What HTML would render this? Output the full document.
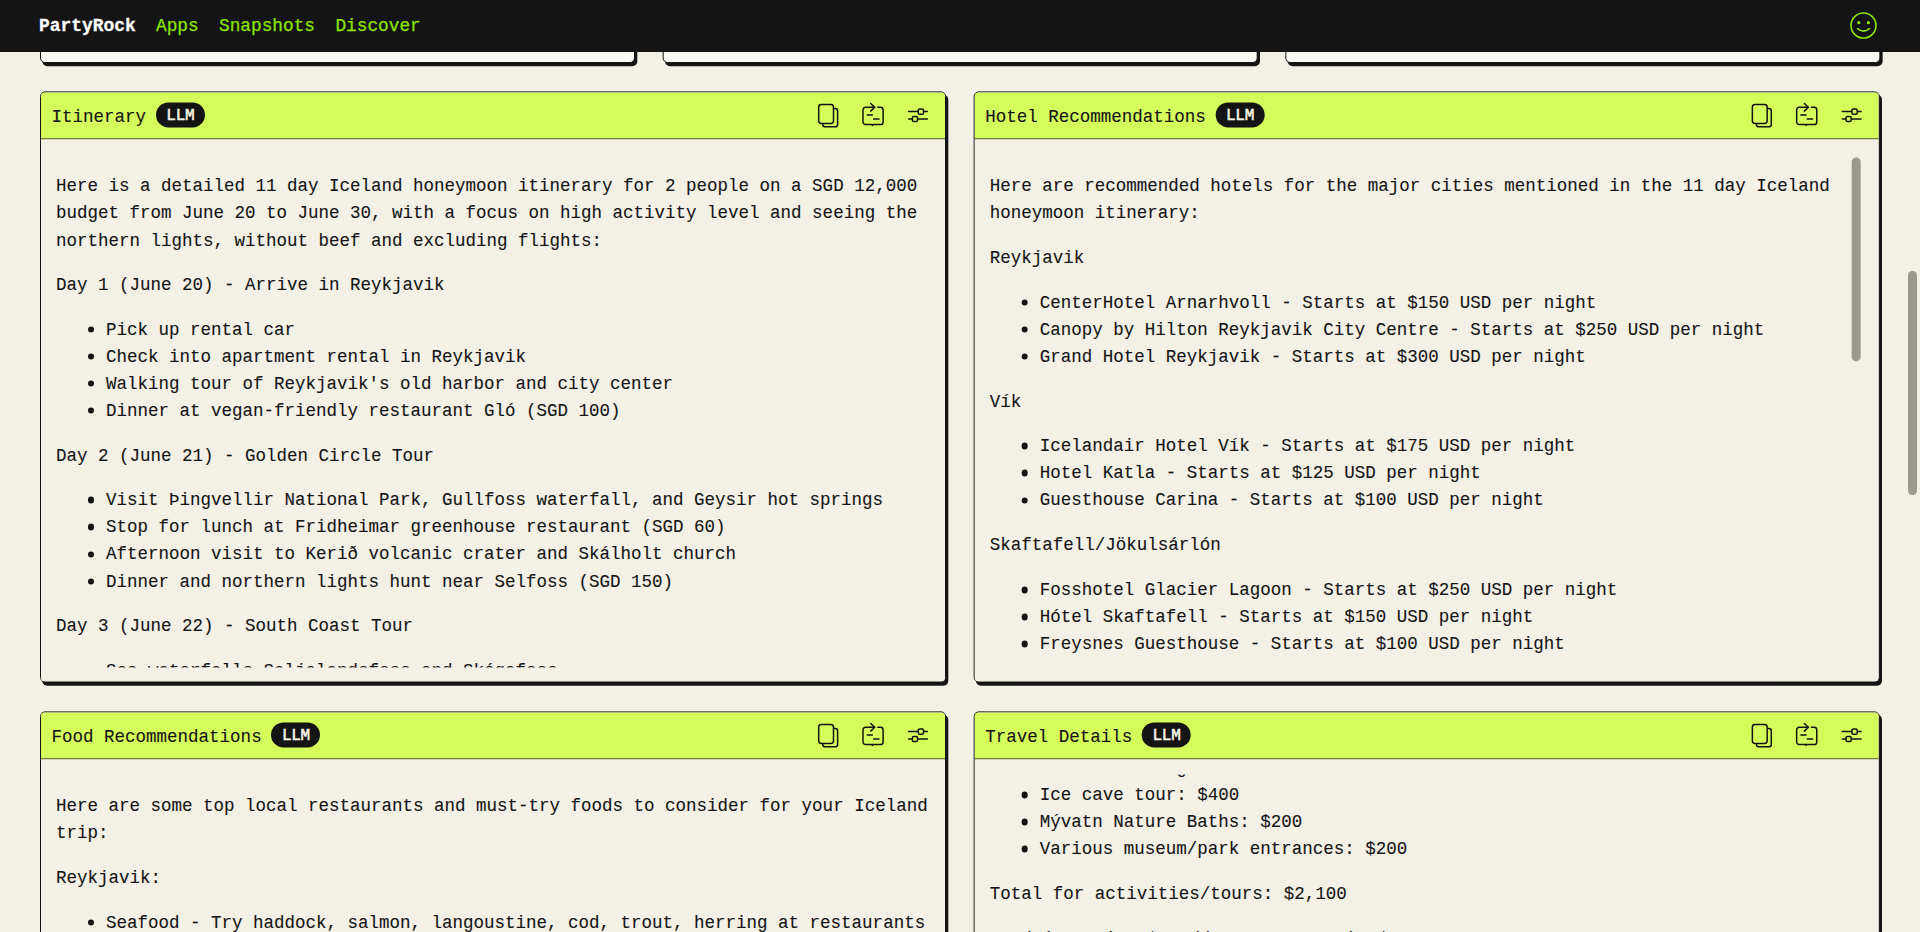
<!DOCTYPE html>
<html lang="en">
<head>
<meta charset="utf-8">
<title>PartyRock</title>
<style>
:root{
  --bg:#f3f0e6;
  --ink:#141414;
  --lime:#d4fd5c;
  --nav:#8be400;
  --fs:17.5px;
  --lh:27.07px;
}
*{box-sizing:border-box;margin:0;padding:0}
html,body{width:1920px;height:932px;overflow:hidden;background:var(--bg)}
body{position:relative;font-family:"Liberation Mono","DejaVu Sans Mono",monospace;font-size:var(--fs);line-height:var(--lh);color:var(--ink);-webkit-text-stroke:0.1px var(--ink)}
/* ---------- top bar ---------- */
.topbar{position:absolute;left:0;top:0;width:1920px;height:52px;background:#141414;z-index:10}
.topbar .brand{position:absolute;left:39px;top:12.6px;height:27px;line-height:27px;color:#fff;font-weight:bold;font-size:17.9px;-webkit-text-stroke:0.3px #fff}
.topbar a{position:absolute;top:12.6px;height:27px;line-height:27px;color:var(--nav);font-size:17.8px;text-decoration:none;-webkit-text-stroke:0.25px var(--nav)}
.topbar .smile{position:absolute;left:1848.5px;top:10.9px;width:29px;height:29px}
/* ---------- cards ---------- */
.card{position:absolute;left:0;top:0;border:1px solid #141414;border-radius:5px;background:var(--bg);box-shadow:2.3px 3.3px 0 0 #141414;overflow:hidden}
.card.light{background:#faf9f4}
.card .hd{position:relative;height:47px;background:var(--lime);border-bottom:1px solid #2a2a22}
.card .hd .title{position:absolute;left:10.6px;top:12.1px;height:27px;line-height:27px;white-space:nowrap;font-size:17.5px}
.card .hd .badge{display:inline-block;vertical-align:top;margin-left:9.7px;margin-top:-2.1px;width:49px;height:25px;padding-top:1.9px;line-height:25.6px;border-radius:13px;background:#141414;color:#f6f4e4;font-weight:normal;font-size:16px;letter-spacing:-0.3px;text-align:center;-webkit-text-stroke:0.55px #f6f4e4}
.card .hd svg{position:absolute;top:-0.9px;left:-1px}
.card .bd{position:absolute;left:0;right:0;top:46.6px;bottom:0;overflow:hidden;background:var(--bg)}
.card .clip{position:absolute;left:0;right:0;top:15px;bottom:14.1px;overflow:hidden}
.card .ct{position:absolute;left:15px;right:15px;top:0}
.ct p{margin:0 0 17.73px 0;white-space:nowrap}
.ct ul{list-style:none;margin:0 0 17.73px 0}
.ct li{position:relative;padding-left:50px;white-space:nowrap}
.ct li::before{content:"";position:absolute;left:31.6px;top:9.1px;width:6.6px;height:6.6px;border-radius:50%;background:#141414}
.thumb{position:absolute;width:9px;border-radius:4.5px;background:#9a9a92}
</style>
</head>
<body>

<div class="topbar">
  <span class="brand">PartyRock</span>
  <a style="left:156px">Apps</a>
  <a style="left:219px">Snapshots</a>
  <a style="left:335.4px">Discover</a>
  <svg class="smile" viewBox="0 0 29 29" fill="none" stroke="#8be400" stroke-width="1.6" stroke-linecap="round">
    <circle cx="14.5" cy="14.5" r="12.5"/>
    <circle cx="9.8" cy="11.7" r="1.6" fill="#8be400" stroke="none"/>
    <circle cx="19.4" cy="11.7" r="1.6" fill="#8be400" stroke="none"/>
    <path d="M8.6 17.6 Q14.5 22.6 20.4 17.6"/>
  </svg>
</div>

<!-- row 1 : partially hidden cards -->
<div class="card light" style="transform:translate(40px,-100px);width:594.67px;height:163px"></div>
<div class="card light" style="transform:translate(662.67px,-100px);width:594.67px;height:163px"></div>
<div class="card light" style="transform:translate(1285.33px,-100px);width:594.67px;height:163px"></div>

<div class="card" style="transform:translate(40px,91.4px);width:906px;height:591px">
  <div class="hd">
    <svg width="906" height="47" viewBox="0 0 906 47" fill="none" stroke="#141414" stroke-width="1.5" stroke-linecap="round" stroke-linejoin="round">
      <path d="M794 17.2h1.2a2.4 2.4 0 0 1 2.4 2.4v13.4a2.4 2.4 0 0 1-2.4 2.4h-10a2.4 2.4 0 0 1-2.4-2.4v-1.2"/>
      <rect x="778.7" y="13.2" width="14.8" height="18.8" rx="2.6" fill="#d4fd5c"/>
      <path d="M834.6 15.9H825.6a2.6 2.6 0 0 0-2.6 2.6v12.1a2.6 2.6 0 0 0 2.6 2.6h14.9a2.6 2.6 0 0 0 2.6-2.6V18.5a2.6 2.6 0 0 0-2.6-2.6h-2.7"/>
      <path d="M830.7 12.1l4 3.8-4 3.8"/>
      <path d="M827.2 23.6h5.2M833.6 27.6h5.4M832.4 33.4v0.8"/>
      <path d="M868.6 20.2h18.8M868.6 27.6h18.8"/>
      <rect x="878.3" y="17.6" width="5.2" height="5.2" rx="1.3" fill="#d4fd5c"/>
      <rect x="872.4" y="25" width="5.1" height="5.2" rx="1.3" fill="#d4fd5c"/>
    </svg>
    <div class="title">Itinerary<span class="badge">LLM</span></div>
  </div>
  <div class="bd"><div class="clip"><div class="ct" style="top:19.4px">
    <p style="line-height:27.45px;margin-bottom:16.45px">Here is a detailed 11 day Iceland honeymoon itinerary for 2 people on a SGD 12,000<br>budget from June 20 to June 30, with a focus on high activity level and seeing the<br>northern lights, without beef and excluding flights:</p>
    <p>Day 1 (June 20) - Arrive in Reykjavik</p>
    <ul>
      <li>Pick up rental car</li>
      <li>Check into apartment rental in Reykjavik</li>
      <li>Walking tour of Reykjavik's old harbor and city center</li>
      <li>Dinner at vegan-friendly restaurant Gló (SGD 100)</li>
    </ul>
    <p>Day 2 (June 21) - Golden Circle Tour</p>
    <ul>
      <li>Visit Þingvellir National Park, Gullfoss waterfall, and Geysir hot springs</li>
      <li>Stop for lunch at Fridheimar greenhouse restaurant (SGD 60)</li>
      <li>Afternoon visit to Kerið volcanic crater and Skálholt church</li>
      <li>Dinner and northern lights hunt near Selfoss (SGD 150)</li>
    </ul>
    <p>Day 3 (June 22) - South Coast Tour</p>
    <ul>
      <li>See waterfalls Seljalandsfoss and Skógafoss</li>
      <li>Walk on Reynisfjara black sand beach</li>
    </ul>
  </div></div></div>
</div>

<div class="card" style="transform:translate(973.67px,91.4px);width:906px;height:591px">
  <div class="hd">
    <svg width="906" height="47" viewBox="0 0 906 47" fill="none" stroke="#141414" stroke-width="1.5" stroke-linecap="round" stroke-linejoin="round">
      <path d="M794 17.2h1.2a2.4 2.4 0 0 1 2.4 2.4v13.4a2.4 2.4 0 0 1-2.4 2.4h-10a2.4 2.4 0 0 1-2.4-2.4v-1.2"/>
      <rect x="778.7" y="13.2" width="14.8" height="18.8" rx="2.6" fill="#d4fd5c"/>
      <path d="M834.6 15.9H825.6a2.6 2.6 0 0 0-2.6 2.6v12.1a2.6 2.6 0 0 0 2.6 2.6h14.9a2.6 2.6 0 0 0 2.6-2.6V18.5a2.6 2.6 0 0 0-2.6-2.6h-2.7"/>
      <path d="M830.7 12.1l4 3.8-4 3.8"/>
      <path d="M827.2 23.6h5.2M833.6 27.6h5.4M832.4 33.4v0.8"/>
      <path d="M868.6 20.2h18.8M868.6 27.6h18.8"/>
      <rect x="878.3" y="17.6" width="5.2" height="5.2" rx="1.3" fill="#d4fd5c"/>
      <rect x="872.4" y="25" width="5.1" height="5.2" rx="1.3" fill="#d4fd5c"/>
    </svg>
    <div class="title">Hotel Recommendations<span class="badge">LLM</span></div>
  </div>
  <div class="bd"><div class="clip"><div class="ct" style="top:19.4px">
    <p>Here are recommended hotels for the major cities mentioned in the 11 day Iceland<br>honeymoon itinerary:</p>
    <p>Reykjavik</p>
    <ul>
      <li>CenterHotel Arnarhvoll - Starts at $150 USD per night</li>
      <li>Canopy by Hilton Reykjavik City Centre - Starts at $250 USD per night</li>
      <li>Grand Hotel Reykjavik - Starts at $300 USD per night</li>
    </ul>
    <p>Vík</p>
    <ul>
      <li>Icelandair Hotel Vík - Starts at $175 USD per night</li>
      <li>Hotel Katla - Starts at $125 USD per night</li>
      <li>Guesthouse Carina - Starts at $100 USD per night</li>
    </ul>
    <p>Skaftafell/Jökulsárlón</p>
    <ul>
      <li>Fosshotel Glacier Lagoon - Starts at $250 USD per night</li>
      <li>Hótel Skaftafell - Starts at $150 USD per night</li>
      <li>Freysnes Guesthouse - Starts at $100 USD per night</li>
    </ul>
  </div></div></div>
  <div class="thumb" style="left:877.2px;top:64.9px;height:204.4px"></div>
</div>

<div class="card" style="transform:translate(40px,711.4px);width:906px;height:591px">
  <div class="hd">
    <svg width="906" height="47" viewBox="0 0 906 47" fill="none" stroke="#141414" stroke-width="1.5" stroke-linecap="round" stroke-linejoin="round">
      <path d="M794 17.2h1.2a2.4 2.4 0 0 1 2.4 2.4v13.4a2.4 2.4 0 0 1-2.4 2.4h-10a2.4 2.4 0 0 1-2.4-2.4v-1.2"/>
      <rect x="778.7" y="13.2" width="14.8" height="18.8" rx="2.6" fill="#d4fd5c"/>
      <path d="M834.6 15.9H825.6a2.6 2.6 0 0 0-2.6 2.6v12.1a2.6 2.6 0 0 0 2.6 2.6h14.9a2.6 2.6 0 0 0 2.6-2.6V18.5a2.6 2.6 0 0 0-2.6-2.6h-2.7"/>
      <path d="M830.7 12.1l4 3.8-4 3.8"/>
      <path d="M827.2 23.6h5.2M833.6 27.6h5.4M832.4 33.4v0.8"/>
      <path d="M868.6 20.2h18.8M868.6 27.6h18.8"/>
      <rect x="878.3" y="17.6" width="5.2" height="5.2" rx="1.3" fill="#d4fd5c"/>
      <rect x="872.4" y="25" width="5.1" height="5.2" rx="1.3" fill="#d4fd5c"/>
    </svg>
    <div class="title">Food Recommendations<span class="badge">LLM</span></div>
  </div>
  <div class="bd"><div class="clip"><div class="ct" style="top:19.4px">
    <p>Here are some top local restaurants and must-try foods to consider for your Iceland<br>trip:</p>
    <p>Reykjavik:</p>
    <ul>
      <li>Seafood - Try haddock, salmon, langoustine, cod, trout, herring at restaurants<br>like Fish Market and Grillmarkaðurinn</li>
    </ul>
  </div></div></div>
</div>

<div class="card" style="transform:translate(973.67px,711.4px);width:906px;height:591px">
  <div class="hd">
    <svg width="906" height="47" viewBox="0 0 906 47" fill="none" stroke="#141414" stroke-width="1.5" stroke-linecap="round" stroke-linejoin="round">
      <path d="M794 17.2h1.2a2.4 2.4 0 0 1 2.4 2.4v13.4a2.4 2.4 0 0 1-2.4 2.4h-10a2.4 2.4 0 0 1-2.4-2.4v-1.2"/>
      <rect x="778.7" y="13.2" width="14.8" height="18.8" rx="2.6" fill="#d4fd5c"/>
      <path d="M834.6 15.9H825.6a2.6 2.6 0 0 0-2.6 2.6v12.1a2.6 2.6 0 0 0 2.6 2.6h14.9a2.6 2.6 0 0 0 2.6-2.6V18.5a2.6 2.6 0 0 0-2.6-2.6h-2.7"/>
      <path d="M830.7 12.1l4 3.8-4 3.8"/>
      <path d="M827.2 23.6h5.2M833.6 27.6h5.4M832.4 33.4v0.8"/>
      <path d="M868.6 20.2h18.8M868.6 27.6h18.8"/>
      <rect x="878.3" y="17.6" width="5.2" height="5.2" rx="1.3" fill="#d4fd5c"/>
      <rect x="872.4" y="25" width="5.1" height="5.2" rx="1.3" fill="#d4fd5c"/>
    </svg>
    <div class="title">Travel Details<span class="badge">LLM</span></div>
  </div>
  <div class="bd"><div class="clip"><div class="ct" style="top:-18.4px">
    <ul>
      <li>Whale watching: <span style="position:relative;top:-2px">$300</span></li>
      <li>Ice cave tour: $400</li>
      <li>Mývatn Nature Baths: $200</li>
      <li>Various museum/park entrances: $200</li>
    </ul>
    <p>Total for activities/tours: $2,100</p>
    <p>Food (assuming $100/day per person): $2,200</p>
    <p>Transportation: $1,500</p>
  </div></div></div>
</div>

<div class="thumb" style="left:1907.8px;top:270.5px;height:224px"></div>
</body>
</html>
